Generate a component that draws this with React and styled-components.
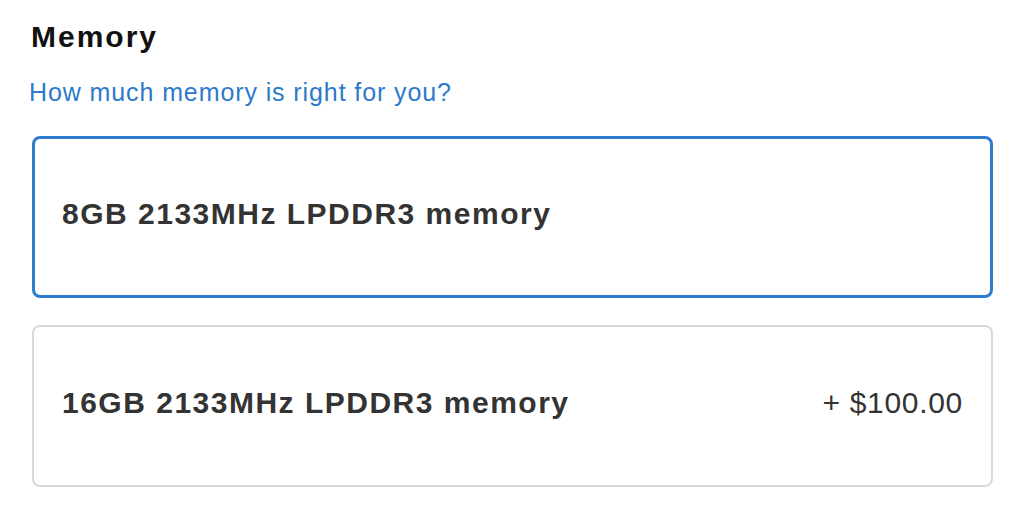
import React from "react";
import styled, { createGlobalStyle } from "styled-components";

const GlobalStyle = createGlobalStyle`
  html, body {
    margin: 0;
    padding: 0;
    background: #ffffff;
  }
  body {
    font-family: "Liberation Sans", Arial, Helvetica, sans-serif;
    -webkit-font-smoothing: antialiased;
  }
  * { box-sizing: border-box; }
`;

const Page = styled.section`
  width: 1024px;
  height: 517px;
  padding: 20px 31px 0 32px;
  display: flex;
  flex-direction: column;
  background: #fff;
`;

const Title = styled.h2`
  margin: 0 0 0 -1px;
  font-size: 30px;
  line-height: 34px;
  font-weight: 700;
  letter-spacing: 2px;
  color: #111111;
`;

const HelpLink = styled.a`
  margin: 24px 0 0 -3px;
  font-size: 25px;
  line-height: 28px;
  letter-spacing: 0.9px;
  color: #2c7ac9;
  text-decoration: none;
  align-self: flex-start;
  cursor: pointer;
`;

const Options = styled.div`
  margin-top: 30px;
  display: flex;
  flex-direction: column;
  gap: 27px;
`;

const OptionCard = styled.button`
  height: 162px;
  width: 100%;
  display: flex;
  align-items: center;
  justify-content: space-between;
  padding: 0 ${(p) => 30 - p.$bw}px 7px ${(p) => 30 - p.$bw}px;
  border: ${(p) => p.$bw}px solid ${(p) => (p.$selected ? "#2f7bcf" : "#d9d9d9")};
  border-radius: 8px;
  background: #ffffff;
  font-family: inherit;
  text-align: left;
  cursor: pointer;
`;

const OptionLabel = styled.span`
  font-size: 30px;
  line-height: 34px;
  font-weight: 700;
  letter-spacing: 1.5px;
  color: #333333;
`;

const OptionPrice = styled.span`
  font-size: 30px;
  line-height: 34px;
  font-weight: 400;
  letter-spacing: 0.7px;
  color: #333333;
`;

const options = [
  { id: "8", label: "8GB 2133MHz LPDDR3 memory", price: null },
  { id: "16", label: "16GB 2133MHz LPDDR3 memory", price: "+ $100.00" },
];

export default function App() {
  const [selected, setSelected] = React.useState("8");
  return (
    <>
      <GlobalStyle />
      <Page>
        <Title>Memory</Title>
        <HelpLink>How much memory is right for you?</HelpLink>
        <Options>
          {options.map((o) => {
            const isSel = o.id === selected;
            return (
              <OptionCard
                key={o.id}
                $selected={isSel}
                $bw={isSel ? 3 : 2}
                onClick={() => setSelected(o.id)}
              >
                <OptionLabel>{o.label}</OptionLabel>
                {o.price && <OptionPrice>{o.price}</OptionPrice>}
              </OptionCard>
            );
          })}
        </Options>
      </Page>
    </>
  );
}
